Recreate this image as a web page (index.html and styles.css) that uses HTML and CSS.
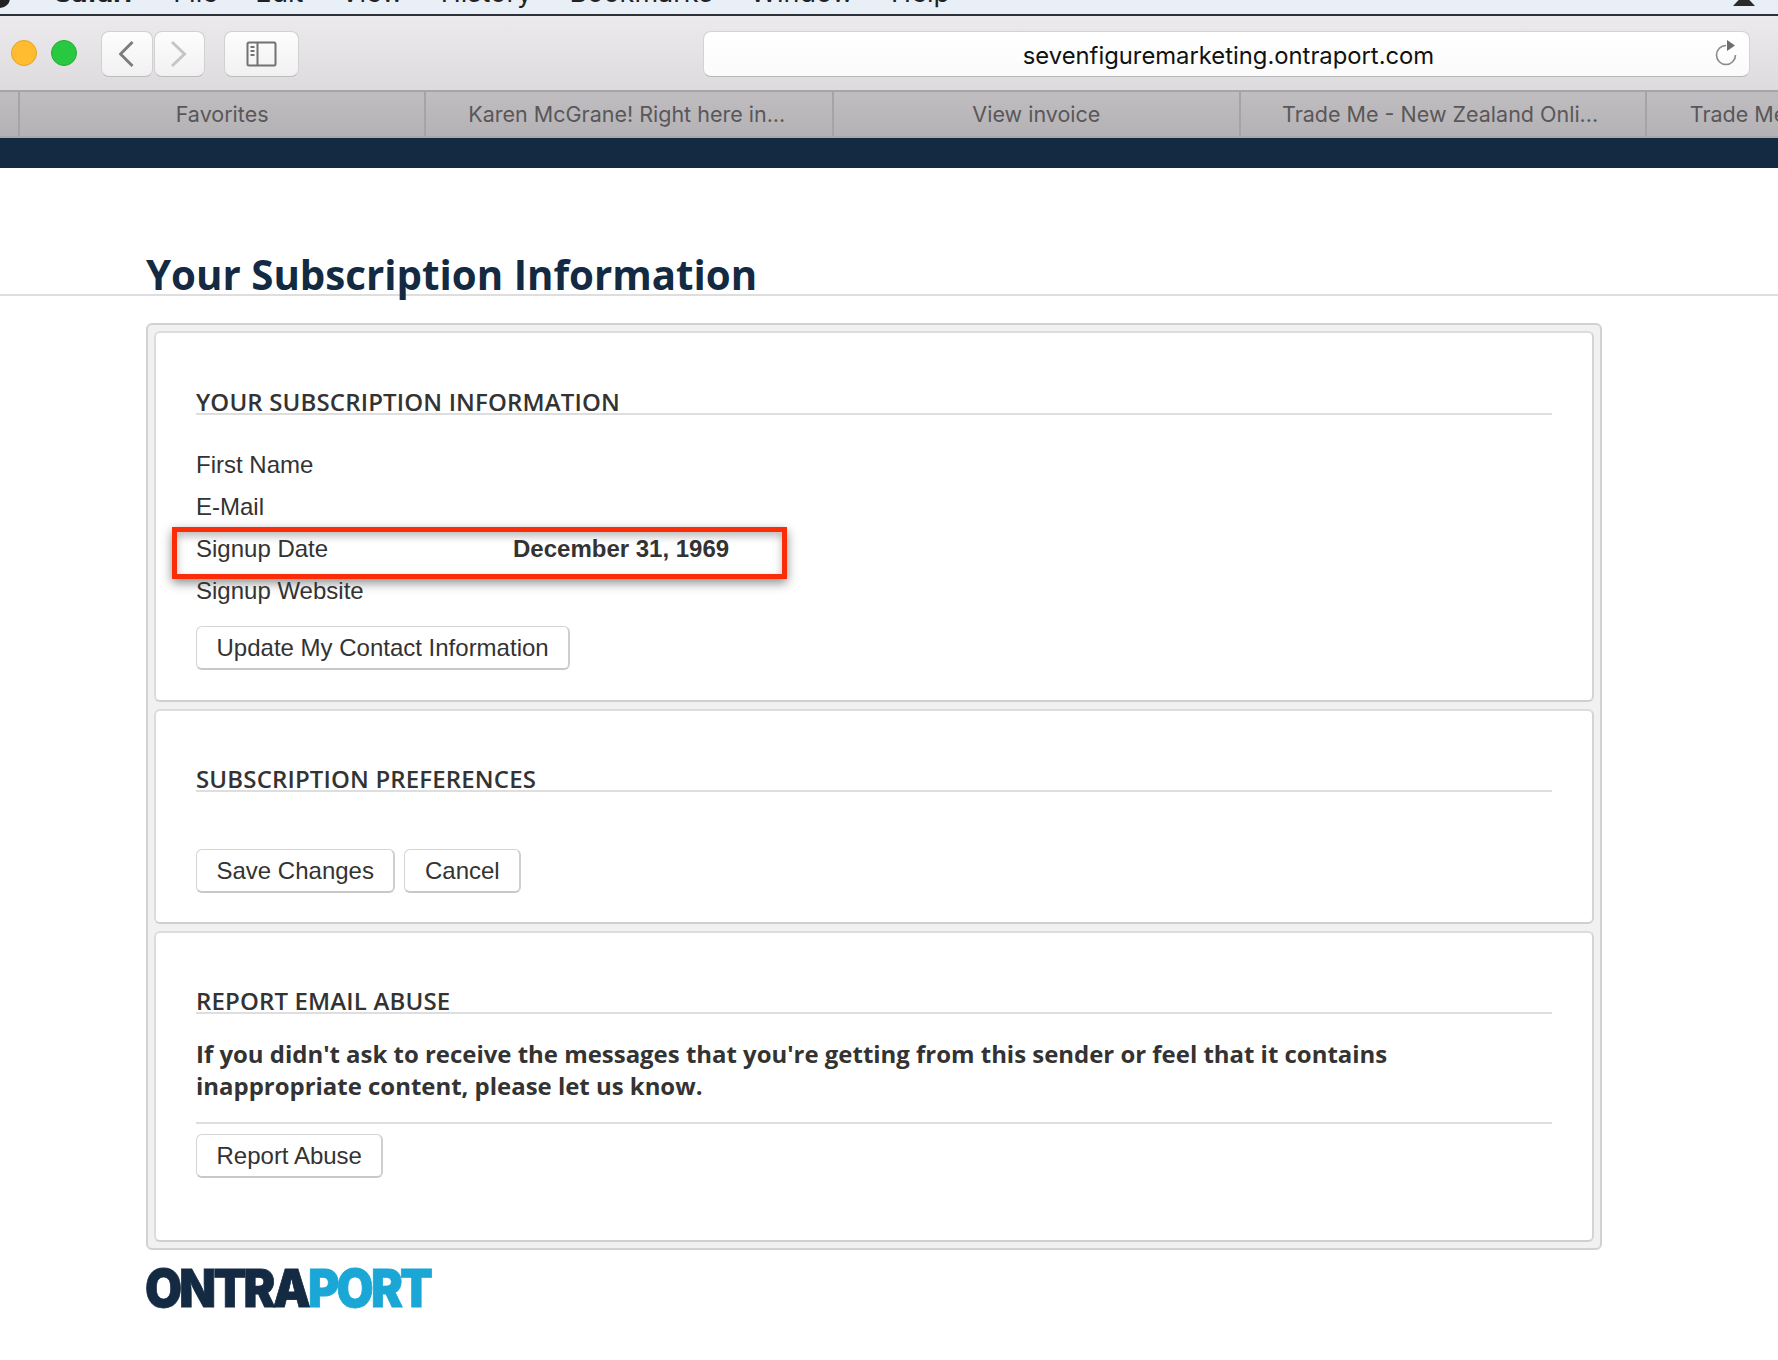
FILE: index.html
```html
<!DOCTYPE html>
<html lang="en">
<head>
<meta charset="utf-8">
<title>Your Subscription Information</title>
<link rel="stylesheet" href="styles.css">
</head>
<body>
<div class="menubar">
  <div class="menu-items">
    <span class="apple"></span>
    <span class="menu-strong">Safari</span><span>File</span><span>Edit</span><span>View</span><span>History</span><span>Bookmarks</span><span>Window</span><span>Help</span>
  </div>
  <span class="menu-user"></span>
</div>
<div class="toolbar">
  <div class="lights"><span class="light yellow"></span><span class="light green"></span></div>
  <div class="nav-group">
    <button class="tool tool-nav" aria-label="Back"><svg width="16" height="28" viewBox="0 0 16 28"><path d="M13.500 2 1.500 14l12 12" class="ico-dark"/></svg></button>
    <button class="tool tool-nav" aria-label="Forward"><svg width="16" height="28" viewBox="0 0 16 28"><path d="M1 2l12.500 12L1 26" class="ico-light"/></svg></button>
  </div>
  <button class="tool tool-side" aria-label="Sidebar"><svg width="31" height="26" viewBox="0 0 31 26"><rect x="1.500" y="1.500" width="28" height="23" rx="1.500" class="ico-box"/><path d="M11.500 1v24" class="ico-box"/><path d="M4.500 6h4M4.500 10h4M4.500 14h4" class="ico-box"/></svg></button>
  <div class="address">
    <span class="address-text">sevenfiguremarketing.ontraport.com</span>
    <svg class="reload" width="24" height="28" viewBox="0 0 24 28"><path d="M12 6.500A9.500 9.500 0 1 0 21.500 16" class="ico-reload"/><path d="M13 1l8 5.500-8 5.500z" class="ico-fill"/></svg>
  </div>
</div>
<div class="tabs">
  <div class="tab tab-stub"></div>
  <div class="tab">Favorites</div>
  <div class="tab tab-wide">Karen McGrane! Right here in...</div>
  <div class="tab">View invoice</div>
  <div class="tab tab-trim">Trade Me - New Zealand Onli...</div>
  <div class="tab tab-last">Trade Me</div>
</div>
<div class="navy"></div>
<main class="page">
  <div class="title-wrap"><h1 class="title">Your Subscription Information</h1></div>
  <div class="outer">
    <section class="panel panel-info">
      <h2 class="heading">YOUR SUBSCRIPTION INFORMATION</h2>
      <div class="rows">
        <div class="row"><span class="label">First Name</span></div>
        <div class="row"><span class="label">E-Mail</span></div>
        <div class="row"><span class="label">Signup Date</span><strong class="value">December 31, 1969</strong><span class="callout"></span></div>
        <div class="row"><span class="label">Signup Website</span></div>
      </div>
      <div class="actions actions-info"><button class="btn">Update My Contact Information</button></div>
    </section>
    <section class="panel panel-prefs">
      <h2 class="heading">SUBSCRIPTION PREFERENCES</h2>
      <div class="actions actions-prefs"><button class="btn">Save Changes</button><button class="btn">Cancel</button></div>
    </section>
    <section class="panel panel-report">
      <h2 class="heading">REPORT EMAIL ABUSE</h2>
      <p class="notice">If you didn't ask to receive the messages that you're getting from this sender or feel that it contains inappropriate content, please let us know.</p>
      <div class="actions actions-report"><button class="btn">Report Abuse</button></div>
    </section>
  </div>
  <div class="logo"><span class="logo-dark">ONTRA</span><span class="logo-blue">PORT</span></div>
</main>
</body>
</html>
```
FILE: styles.css
```css
* { box-sizing: border-box; }
html, body { margin: 0; padding: 0; }
body { width: 1778px; height: 1360px; overflow: hidden; background: #fff; font-family: "Liberation Sans", Arial, sans-serif; color: #333; }
button { font-family: inherit; margin: 0; }

.menubar { height: 16px; background: #e8eff7; border-bottom: 2px solid #2e3238; display: flex; justify-content: space-between; overflow: hidden; padding: 0 23px 0 0; }
.menu-items { display: flex; gap: 37.4px; font-family: Inter, "Liberation Sans", sans-serif; font-size: 27px; line-height: 24px; height: 24px; margin-top: -19px; color: #222; padding-left: 54px; position: relative; }
.menu-strong { font-weight: 700; margin-right: 4px; }
.apple { position: absolute; left: -10px; top: 7px; width: 20px; height: 20px; border-radius: 50%; background: #222; }
.menu-user { width: 22px; height: 7px; margin-top: -1px; background: #2b2b2b; clip-path: polygon(30% 0, 70% 0, 100% 100%, 0 100%); }

.toolbar { height: 74px; background: linear-gradient(#eceaec, #dddbdd); display: flex; align-items: flex-start; padding-top: 15px; position: relative; }
.lights { display: flex; gap: 14px; padding: 9px 0 0 11px; width: 101px; }
.light { width: 26px; height: 26px; border-radius: 50%; display: block; }
.yellow { background: #febc2e; border: 1px solid #e5a32a; }
.green { background: #28c840; border: 1px solid #20ab34; }
.nav-group { display: flex; gap: 1px; }
.tool { height: 46px; background: linear-gradient(#fdfdfd, #f2f1f2); border: 1px solid #d2d0d2; border-bottom-color: #bdbbbd; border-radius: 8px; padding: 0; display: flex; align-items: center; justify-content: center; }
.tool-nav { width: 51.5px; }
.tool-side { width: 75px; margin-left: 19px; }
.ico-dark { fill: none; stroke: #7d7b7d; stroke-width: 3; }
.ico-light { fill: none; stroke: #c6c4c6; stroke-width: 3; }
.ico-box { fill: none; stroke: #737173; stroke-width: 2; }
.ico-reload { fill: none; stroke: #8a888a; stroke-width: 1.6; }
.ico-fill { fill: #6f6d6f; }

.address { position: absolute; left: 703px; top: 15px; width: 1047px; height: 46px; background: linear-gradient(#fff, #fbfbfb); border: 1px solid #d4d2d4; border-bottom-color: #b8b6b8; border-radius: 8px; display: flex; align-items: center; justify-content: center; }
.address-text { font-family: Inter, "Liberation Sans", sans-serif; font-size: 23.8px; color: #111; margin: 2px 0 0 4px; }
.reload { position: absolute; right: 11px; top: 7px; }

.tabs { height: 48px; display: flex; background: linear-gradient(#bfbdbf, #b4b2b4); border-top: 2px solid #a7a5a7; border-bottom: 2px solid #a9a7a9; }
.tab { flex: 0 0 406.25px; border-right: 2px solid #a5a3a5; text-align: center; font-family: Inter, "Liberation Sans", sans-serif; font-size: 21.5px; line-height: 44px; color: #595759; white-space: nowrap; overflow: hidden; }
.tab-stub { flex-basis: 20px; }
.tab-wide { flex-basis: 408px; padding-right: 5px; }
.tab-trim { padding-right: 5px; }
.tab-last { flex: 1 1 auto; text-align: left; padding-left: 43px; border-right: 0; }

.navy { height: 30px; background: #132a42; }

.page { display: block; }
.title-wrap { height: 128px; border-bottom: 2px solid #dedede; padding: 83px 0 0 146px; }
.title { margin: 0; font-family: "Open Sans", sans-serif; font-weight: 700; font-size: 40.25px; line-height: 48px; color: #132a42; white-space: nowrap; }

.outer { margin: 27px 0 0 146px; width: 1456px; border: 2px solid #d2d2d2; border-radius: 6px; background: #f1f1f1; padding: 6px; display: flex; flex-direction: column; gap: 7px; }
.panel { background: #fff; border: 2px solid #dcdcdc; border-bottom-color: #cfcfcf; border-right-color: #d4d4d4; border-radius: 6px; padding: 0 40px; }
.panel-info { height: 371px; padding-top: 54px; }
.panel-prefs { height: 215px; padding-top: 53px; }
.panel-report { height: 311px; padding-top: 53px; }
.heading { margin: 0; font-family: "Open Sans", sans-serif; font-weight: 600; font-size: 24px; letter-spacing: .15px; line-height: 30px; color: #333; border-bottom: 2px solid #dedede; height: 28px; white-space: nowrap; }

.rows { padding-top: 29px; }
.row { position: relative; height: 42px; display: flex; font-size: 24px; line-height: 42px; color: #333; white-space: nowrap; }
.label { width: 317px; }
.value { font-weight: 700; }
.callout { position: absolute; left: -24px; top: -1px; width: 615px; height: 52px; border: 5px solid #fb2c08; box-shadow: 0 4px 10px rgba(0,0,0,.45), inset 0 4px 8px rgba(0,0,0,.28); }

.actions { display: flex; gap: 9px; }
.actions-info { padding-top: 14px; }
.actions-prefs { padding-top: 57px; }
.actions-report { padding-top: 10px; }
.btn { height: 44px; padding: 0 19.5px; background: #fff; border: 1px solid #d5d5d5; border-bottom: 2px solid #c8c8c8; border-right: 2px solid #cfcfcf; border-radius: 6px; font-size: 24px; color: #333; white-space: nowrap; }

.notice { margin: 0; padding: 24px 0 20px; border-bottom: 2px solid #dedede; font-family: "Open Sans", sans-serif; font-weight: 700; font-size: 23.95px; line-height: 32px; color: #333; }

.logo { margin: 20px 0 0 145px; font-family: Inter, sans-serif; font-weight: 900; font-size: 52px; line-height: 38px; height: 38px; letter-spacing: -3px; -webkit-text-stroke: .8px currentColor; white-space: nowrap; display: inline-block; transform: scaleX(.92); transform-origin: left center; }
.logo-dark { color: #132a42; }
.logo-blue { color: #1ba7d6; }
```
